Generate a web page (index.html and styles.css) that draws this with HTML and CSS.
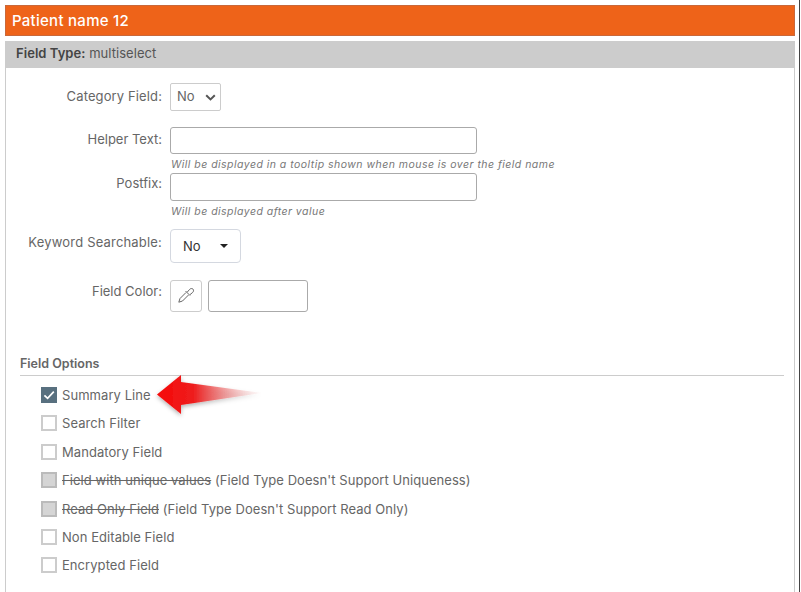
FILE: index.html
```html
<!DOCTYPE html>
<html lang="en">
<head>
<meta charset="utf-8">
<title>Patient name 12</title>
<link rel="stylesheet" href="styles.css">
</head>
<body>
<div class="page">
  <h1 class="title">Patient name 12</h1>
  <section class="panel">
    <div class="type-bar"><b>Field Type:</b> multiselect</div>
    <div class="form">
      <div class="row row-category">
        <label class="label">Category Field:</label>
        <div class="select">No<svg class="chev" width="11" height="7" viewBox="0 0 11 7"><path d="M1.2 1.2 5.5 5.4 9.8 1.2" fill="none" stroke="#555" stroke-width="2"/></svg></div>
      </div>
      <div class="row row-helper">
        <label class="label">Helper Text:</label>
        <div class="field"><div class="input wide"></div><p class="hint">Will be displayed in a tooltip shown when mouse is over the field name</p></div>
      </div>
      <div class="row row-postfix">
        <label class="label">Postfix:</label>
        <div class="field"><div class="input wide tall"></div><p class="hint">Will be displayed after value</p></div>
      </div>
      <div class="row row-keyword">
        <label class="label">Keyword Searchable:</label>
        <div class="dropdown">No<span class="caret"></span></div>
      </div>
      <div class="row row-color">
        <label class="label">Field Color:</label>
        <div class="picker"><svg width="18" height="18" viewBox="0 0 18 18" fill="none" stroke="#666" stroke-width="1"><path d="M9 5.5 3 11.5 1.8 15.2 5.5 14 11.5 8"/><path d="M8.5 4 13 8.5"/><path d="M10.2 5.2 12.5 2.5C13.5 1.3 15.2 1.3 16 2.1 16.8 3 16.7 4.5 15.6 5.5L12.8 7.8"/></svg></div>
        <div class="input swatch"></div>
      </div>
    </div>
    <div class="options">
      <h2 class="options-title">Field Options</h2>
      <ul class="checks">
        <li class="check"><span class="box on"><svg width="16" height="16" viewBox="0 0 16 16"><path d="M3.4 8.3 6.6 11.4 12.8 4.6" fill="none" stroke="#fff" stroke-width="1.7"/></svg></span>Summary Line</li>
        <li class="check"><span class="box"></span>Search Filter</li>
        <li class="check"><span class="box"></span>Mandatory Field</li>
        <li class="check"><span class="box off"></span><s>Field with unique values</s>&nbsp;(Field Type Doesn't Support Uniqueness)</li>
        <li class="check"><span class="box off"></span><s>Read Only Field</s>&nbsp;(Field Type Doesn't Support Read Only)</li>
        <li class="check"><span class="box"></span>Non Editable Field</li>
        <li class="check"><span class="box"></span>Encrypted Field</li>
      </ul>
    </div>
  </section>
  <svg class="arrow" width="120" height="50" viewBox="0 0 120 50">
    <defs>
      <linearGradient id="fade" x1="0" x2="1" y1="0" y2="0">
        <stop offset="0" stop-color="#f60808"/>
        <stop offset="0.35" stop-color="#ee1e1e"/>
        <stop offset="1" stop-color="#e8b0b0" stop-opacity="0.05"/>
      </linearGradient>
      <filter id="shade" x="-10%" y="-20%" width="120%" height="150%">
        <feDropShadow dx="0" dy="2" stdDeviation="2" flood-color="#000" flood-opacity="0.3"/>
      </filter>
    </defs>
    <path d="M3 19.5 27 0V7L108 18 27 30V39Z" fill="url(#fade)" filter="url(#shade)"/>
  </svg>
</div>
</body>
</html>
```
FILE: styles.css
```css
* { box-sizing: border-box; }
html, body { margin: 0; padding: 0; height: 592px; overflow: hidden; background: #fff; }
body { font-family: Inter, "Open Sans", "Liberation Sans", sans-serif; font-size: 13px; color: #666; }
.page { position: relative; height: 592px; padding: 5px 6px 0 5px; }
.page::after { content: ""; position: absolute; top: 0; right: 1px; bottom: 0; width: 1px; background: #444; }
.title { margin: 0; height: 31px; padding-left: 6px; background: #ee6319; border: 1px solid #c9683a; color: #fff; font-size: 15px; font-weight: 500; line-height: 29px; letter-spacing: 0.27px; }
.panel { margin-top: 5px; height: 560px; border-left: 1px solid #ccc; border-right: 1px solid #ccc; }
.type-bar { height: 27px; margin-left: -1px; margin-right: -1px; padding-left: 11px; background: #ccc; color: #555; line-height: 25px; letter-spacing: 0.05px; }
.type-bar b { font-weight: 600; color: #444; }
.form { display: flex; flex-direction: column; }
.row { display: flex; align-items: flex-start; }
.label { width: 156px; margin-right: 8px; text-align: right; line-height: 20px; color: #666; }
.row-category { margin-top: 15px; }
.row-category .label { padding-top: 3px; letter-spacing: 0.12px; }
.row-helper { margin-top: 16px; }
.row-helper .label { padding-top: 2px; }
.row-postfix { margin-top: 0; }
.row-postfix .label { padding-top: 0; }
.row-keyword { margin-top: 0; }
.row-keyword .label { padding-top: 3px; letter-spacing: 0.18px; }
.row-color { margin-top: 17px; }
.row-color .label { padding-top: 1px; }
.select { width: 51px; height: 28px; padding-left: 6px; border: 1px solid #ccc; border-radius: 2px; line-height: 25px; color: #666; position: relative; }
.chev { position: absolute; right: 4px; top: 10px; }
.field { display: flex; flex-direction: column; }
.input { border: 1px solid #aaa; border-radius: 3px; background: #fff; }
.wide { width: 307px; height: 27px; }
.tall { height: 28px; }
.hint { margin: 0; height: 19px; font-size: 10.5px; font-style: italic; line-height: 21px; color: #777; white-space: nowrap; padding-left: 1px; letter-spacing: 0.47px; }
.row-postfix .hint { height: 28px; line-height: 21px; }
.dropdown { width: 71px; height: 34px; padding-left: 12px; border: 1px solid #d4d8e0; border-radius: 4px; line-height: 32px; color: #333; display: flex; align-items: center; position: relative; }
.caret { position: absolute; left: 49px; top: 14px; width: 0; height: 0; border-left: 4px solid transparent; border-right: 4px solid transparent; border-top: 4px solid #222; }
.picker { width: 32px; height: 32px; border: 1px solid #ccc; border-radius: 3px; display: flex; align-items: center; justify-content: center; margin-right: 6px; }
.swatch { width: 100px; height: 32px; }
.options { margin: 43px 10px 0 14px; }
.options-title { margin: 0; height: 21px; font-size: 12.5px; font-weight: 600; line-height: 18px; color: #666; border-bottom: 1px solid #ccc; }
.checks { list-style: none; margin: 0; padding: 4.8px 0 0 21px; }
.check { display: flex; align-items: center; height: 28.4px; white-space: pre; color: #666; letter-spacing: 0.06px; }
.check s { color: #666; }
.box { flex: none; width: 16px; height: 16px; margin-right: 5px; border: 2px solid #ccc; background: #fff; }
.box.on { background: #58707f; border: 0; }
.box.on svg { display: block; }
.box.off { background: #d5d5d5; border-color: #bbb; }
.arrow { position: absolute; left: 154px; top: 375px; overflow: visible; }
```
